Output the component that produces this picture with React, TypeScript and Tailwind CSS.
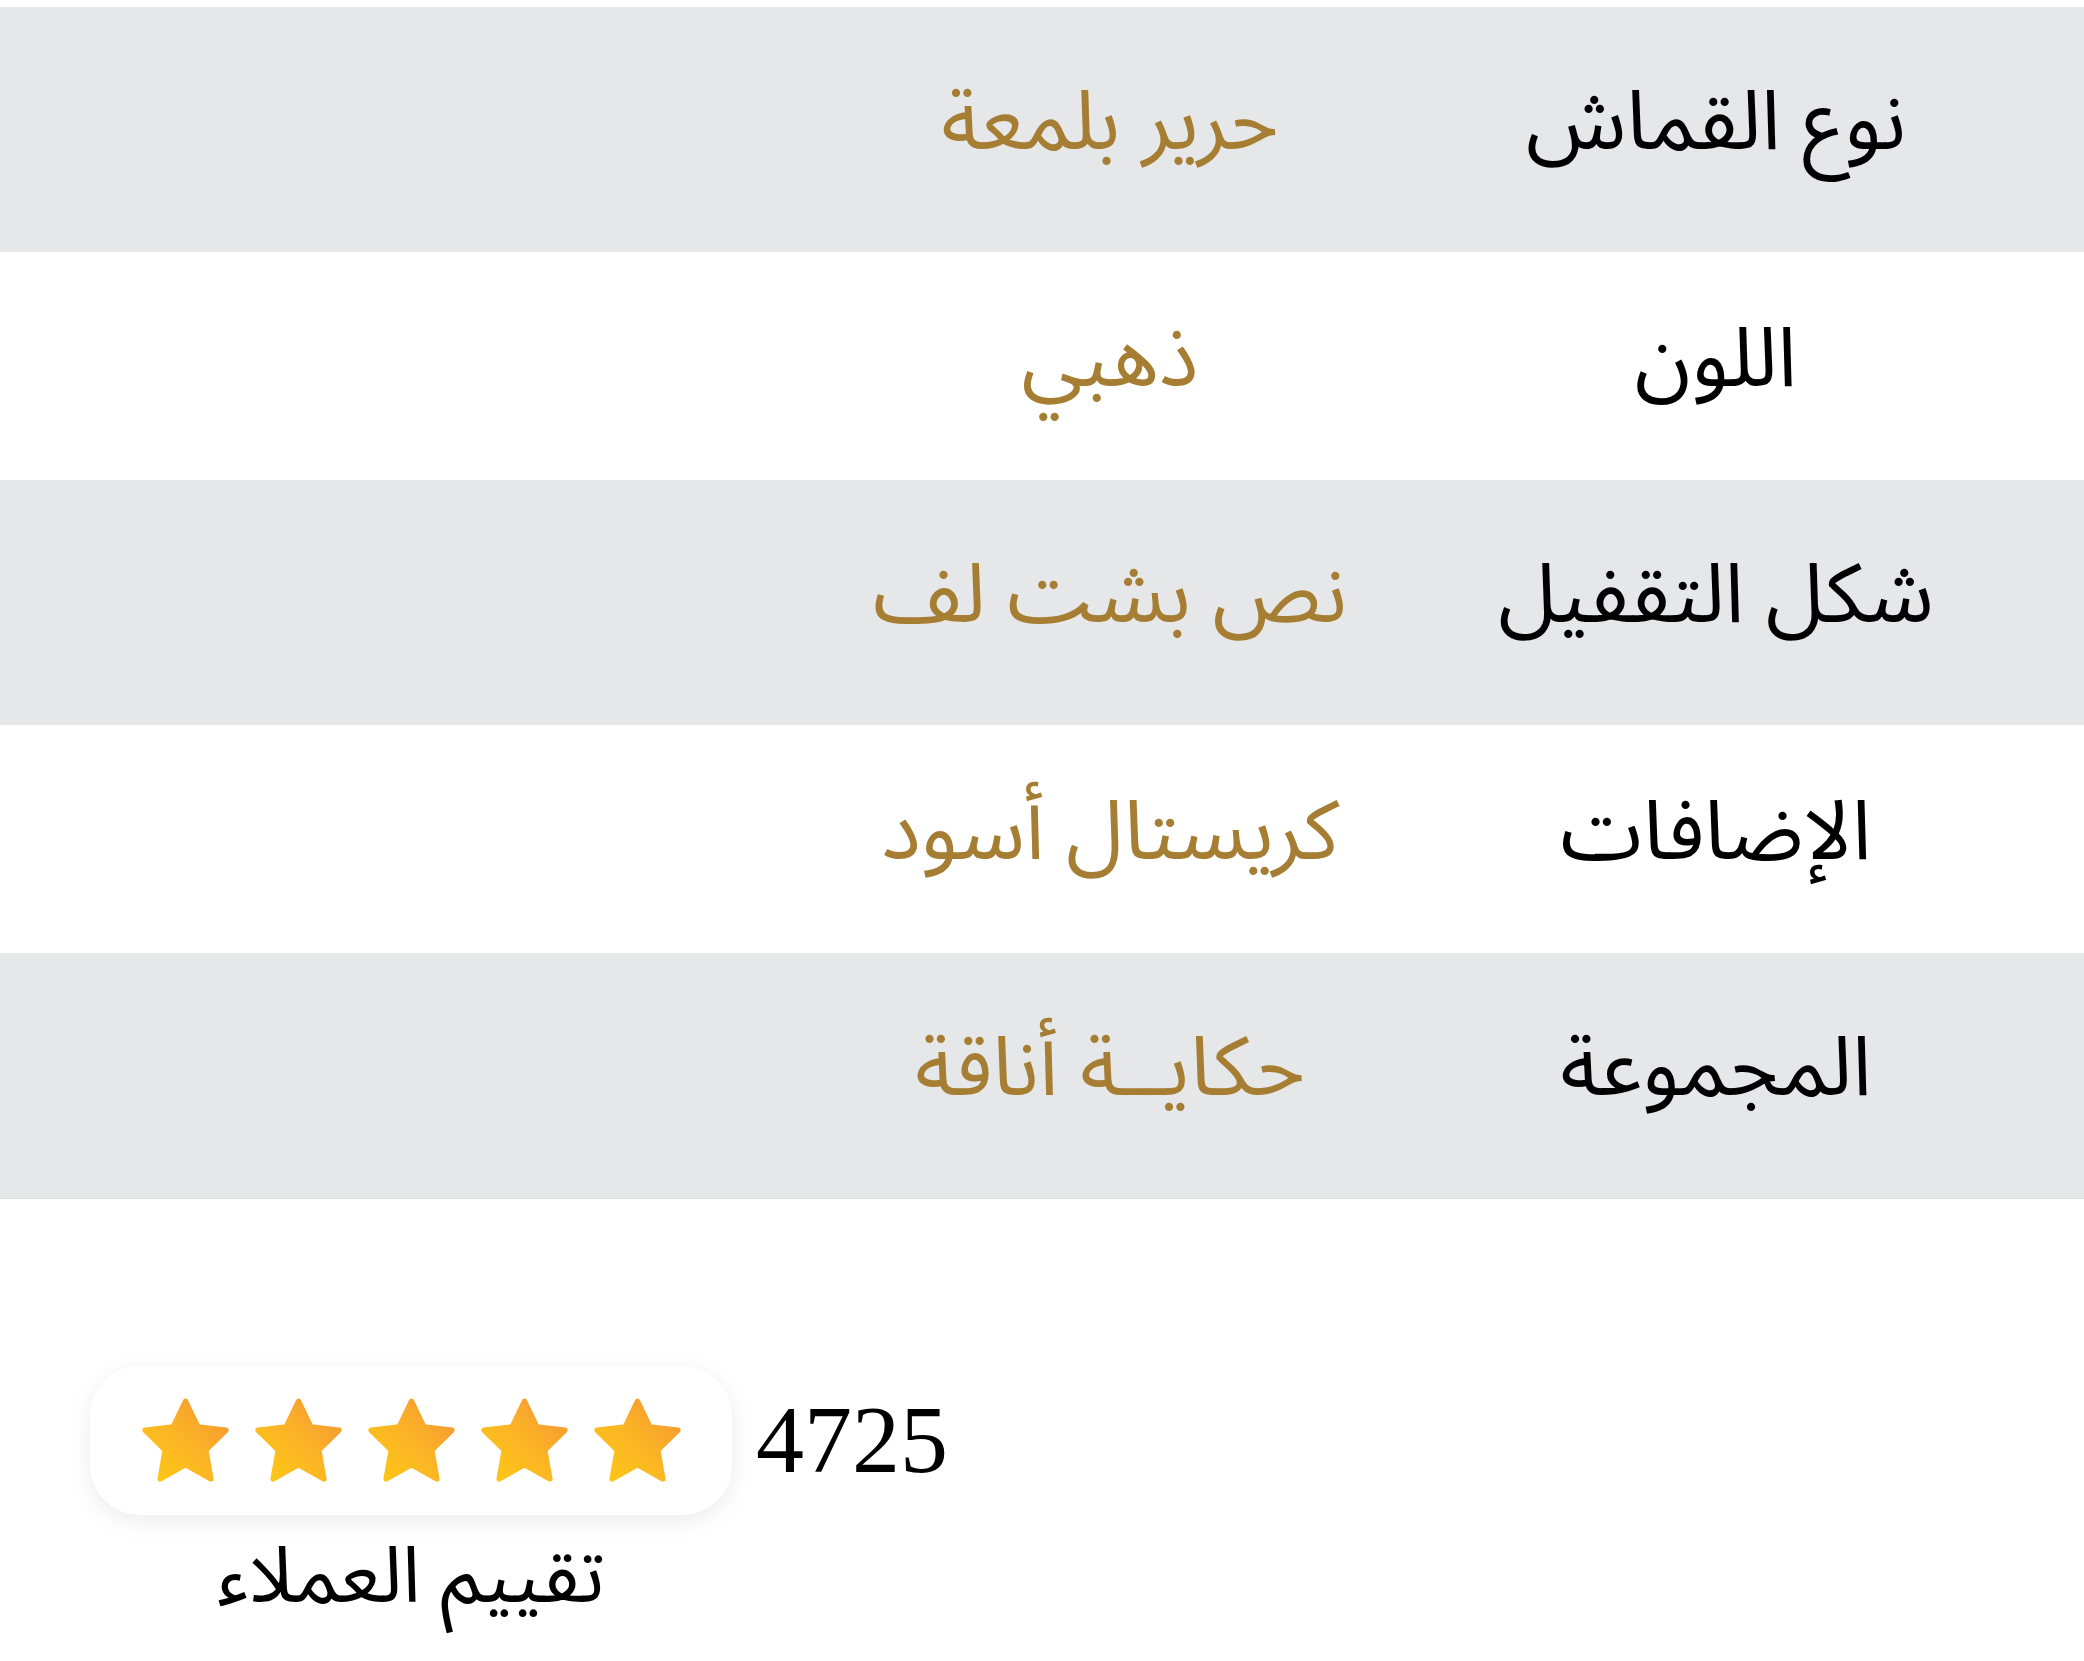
import React from "react";

const rows = [
  { label: "نوع القماش", value: "حرير بلمعة", gray: true },
  { label: "اللون", value: "ذهبي", gray: false },
  { label: "شكل التقفيل", value: "نص بشت لف", gray: true },
  { label: "الإضافات", value: "كريستال أسود", gray: false },
  { label: "المجموعة", value: "حكايــة أناقة", gray: true },
];

const arabic = { fontFamily: '"Noto Sans Arabic", "DejaVu Sans", sans-serif' };

function Star({ id }: { id: string }) {
  return (
    <svg width="95" height="91" viewBox="0 0 24 23" className="block">
      <defs>
        <linearGradient id={id} x1="1" y1="0" x2="0" y2="1">
          <stop offset="0" stopColor="#f39434" />
          <stop offset="0.5" stopColor="#fbb425" />
          <stop offset="1" stopColor="#fdc914" />
        </linearGradient>
      </defs>
      <polygon
        points="12,1.6 15.1,8.1 22.2,8.9 17.1,13.9 18.4,21.2 12,17.6 5.6,21.2 6.9,13.9 1.8,8.9 8.9,8.1"
        fill={`url(#${id})`}
        stroke={`url(#${id})`}
        strokeWidth="1.4"
        strokeLinejoin="round"
      />
    </svg>
  );
}

export default function App() {
  return (
    <div className="min-h-[1661px] w-full bg-white pt-[7px]">
      <div dir="rtl" style={arabic}>
        {rows.map((r, i) => (
          <div
            key={i}
            className={
              r.gray
                ? "grid h-[245px] grid-cols-[736px_476px_1fr] items-center bg-[#e6e7e9]"
                : "grid h-[228px] grid-cols-[736px_476px_1fr] items-center bg-white"
            }
          >
            <div className="pb-[14px] text-center text-[83px] leading-none text-black">{r.label}</div>
            <div className="pb-[14px] text-center text-[83px] leading-none text-[#a67e33]">{r.value}</div>
            <div />
          </div>
        ))}
        <div className="h-px bg-[#dcdde0]" />
      </div>

      <div className="mt-[167px] flex flex-col items-start pl-[90px]">
        <div className="flex items-center gap-[24px]">
          <div className="flex h-[149px] w-[642px] items-center justify-center gap-[18px] rounded-[50px] bg-white shadow-[0_6px_22px_rgba(0,0,0,0.08)]">
            {[0, 1, 2, 3, 4].map((k) => (
              <Star key={k} id={`sg${k}`} />
            ))}
          </div>
          <div
            className="pb-[2px] text-[96px] leading-none text-black"
            style={{ fontFamily: '"Liberation Serif", "Times New Roman", serif' }}
          >
            4725
          </div>
        </div>
        <div
          dir="rtl"
          className="mt-[24px] w-[642px] text-center text-[78px] leading-none text-black"
          style={arabic}
        >
          تقييم العملاء
        </div>
      </div>
    </div>
  );
}
